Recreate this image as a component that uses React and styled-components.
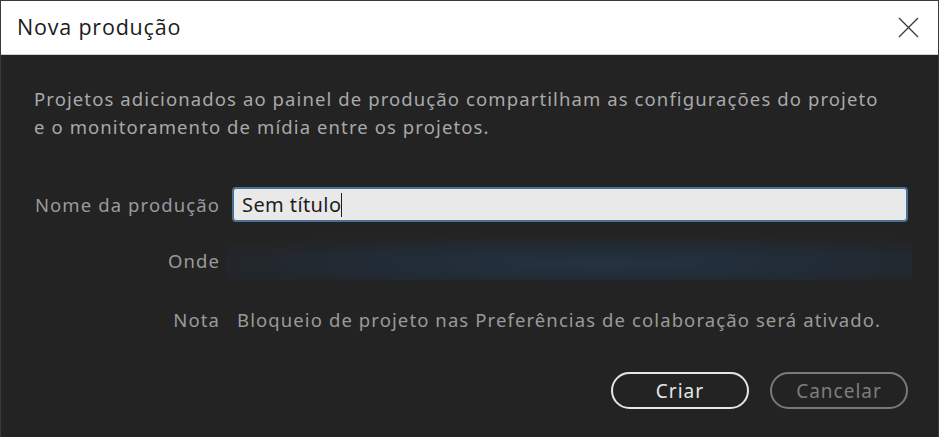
import React from 'react';
import styled, { createGlobalStyle } from 'styled-components';

const Global = createGlobalStyle`
  html, body {
    margin: 0;
    padding: 0;
    background: #232323;
  }
  * { box-sizing: border-box; }
`;

const Window = styled.div`
  width: 939px;
  height: 437px;
  display: flex;
  flex-direction: column;
  background: #232323;
  border: 1px solid #3a3a3a;
  border-bottom: none;
  overflow: hidden;
`;

const TitleBar = styled.div`
  flex: 0 0 54px;
  display: flex;
  align-items: center;
  justify-content: space-between;
  background: #ffffff;
  border-bottom: 1px solid #cfcfcf;
  padding: 0 18px 0 16px;
`;

const Title = styled.span`
  font-family: "Open Sans", "Noto Sans", sans-serif;
  font-size: 21.5px;
  letter-spacing: 0.8px;
  color: #1b1b1b;
  margin-top: -2px;
`;

const Close = styled.button`
  border: none;
  background: none;
  padding: 0;
  width: 24px;
  height: 24px;
  display: flex;
  align-items: center;
  justify-content: center;
  cursor: pointer;
`;

const Body = styled.div`
  flex: 1;
  display: flex;
  flex-direction: column;
  padding: 30px 30px 0 33px;
  font-family: "Noto Sans", "Open Sans", sans-serif;
  letter-spacing: 1.1px;
`;

const Intro = styled.p`
  margin: 0;
  font-size: 18.5px;
  line-height: 28px;
  color: #a9a9a9;
`;

const Form = styled.div`
  display: grid;
  grid-template-columns: 186px 1fr;
  column-gap: 12px;
  row-gap: 16px;
  margin-top: 46px;
  align-items: center;
`;

const Label = styled.span`
  font-size: 18.5px;
  color: #9a9a9a;
  text-align: right;
  white-space: nowrap;
  margin-top: ${p => p.$offset || 0}px;
`;

const Input = styled.div`
  height: 35px;
  background: #e9e9e9;
  border: 2px solid #4c7197;
  border-radius: 4px;
  display: flex;
  align-items: center;
  padding-left: 8px;
  font-size: 20px;
  letter-spacing: 0.4px;
  color: #1e1e1e;
`;

const Caret = styled.span`
  display: inline-block;
  width: 1px;
  height: 24px;
  background: #1e1e1e;
`;

const Where = styled.div`
  height: 41px;
  margin-left: -6px;
  margin-right: -4px;
  margin-top: 1px;
  background: radial-gradient(ellipse 70% 80% at 55% 60%, #243242 0%, #222c37 45%, #232323 100%);
`;

const Note = styled.span`
  font-size: 18.5px;
  color: #9a9a9a;
  margin-left: 5px;
  margin-top: ${p => p.$offset || 0}px;
  white-space: nowrap;
`;

const Actions = styled.div`
  display: flex;
  justify-content: flex-end;
  gap: 21px;
  margin-top: 40px;
`;

const Button = styled.button`
  width: 138px;
  height: 37px;
  border-radius: 19px;
  background: transparent;
  border: 2px solid ${p => (p.$primary ? '#e6e6e6' : '#7a7a7a')};
  color: ${p => (p.$primary ? '#e6e6e6' : '#7d7d7d')};
  font-family: "Noto Sans", "Open Sans", sans-serif;
  font-size: 19px;
  letter-spacing: 1px;
  padding: 0;
  cursor: pointer;
`;

export default function App() {
  return (
    <>
      <Global />
      <Window>
        <TitleBar>
          <Title>Nova produção</Title>
          <Close title="Fechar">
            <svg width="21" height="21" viewBox="0 0 21 21">
              <path d="M1 1 L20 20 M20 1 L1 20" stroke="#3a3a3a" strokeWidth="1.3" fill="none" />
            </svg>
          </Close>
        </TitleBar>
        <Body>
          <Intro>
            Projetos adicionados ao painel de produção compartilham as configurações do projeto
            <br />
            e o monitoramento de mídia entre os projetos.
          </Intro>
          <Form>
            <Label>Nome da produção</Label>
            <Input>Sem título<Caret /></Input>
            <Label $offset={3}>Onde</Label>
            <Where />
            <Label $offset={11}>Nota</Label>
            <Note $offset={11}>Bloqueio de projeto nas Preferências de colaboração será ativado.</Note>
          </Form>
          <Actions>
            <Button $primary>Criar</Button>
            <Button>Cancelar</Button>
          </Actions>
        </Body>
      </Window>
    </>
  );
}
